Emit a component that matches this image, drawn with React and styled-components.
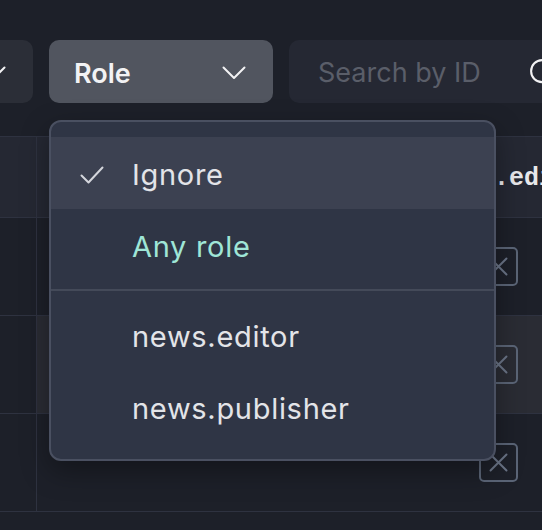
import React from "react";
import styled, { createGlobalStyle } from "styled-components";

const GlobalStyle = createGlobalStyle`
  html, body {
    margin: 0;
    padding: 0;
    background: #1d2029;
  }
  body {
    font-family: Inter, "Noto Sans", sans-serif;
    overflow: hidden;
  }
  * {
    box-sizing: border-box;
  }
`;

const Page = styled.div`
  width: 542px;
  height: 530px;
  overflow: hidden;
  background: #1d2029;
  padding-top: 40px;
`;

const Toolbar = styled.div`
  display: flex;
  gap: 16px;
  height: 63px;
  margin-left: -167px;
`;

const SelectWrap = styled.div`
  position: relative;
  flex: none;
`;

const SelectButton = styled.button`
  width: ${(p) => p.$w}px;
  height: 63px;
  border: none;
  border-radius: 10px;
  background: ${(p) => (p.$open ? "#51555f" : "#2b2e37")};
  color: #f2f2f4;
  font-family: Inter, sans-serif;
  font-weight: 600;
  font-size: 27px;
  display: flex;
  align-items: center;
  justify-content: ${(p) => (p.$iconOnly ? "flex-end" : "space-between")};
  padding: 3px 27px 0 25px;
`;

const SearchBox = styled.div`
  flex: none;
  width: 290px;
  height: 63px;
  border-radius: 10px;
  background: #252833;
  display: flex;
  align-items: center;
  justify-content: space-between;
  padding: 2px 19px 0 29px;
  color: #5a5e69;
  font-size: 27px;
`;

const Menu = styled.div`
  position: absolute;
  top: 80px;
  left: 0;
  z-index: 10;
  width: 447px;
  border: 2px solid #4a5061;
  border-radius: 12px;
  background: #2f3545;
  padding: 15px 0 16px;
  box-shadow: 0 10px 28px rgba(0, 0, 0, 0.35);
`;

const MenuItem = styled.div`
  height: 72px;
  display: flex;
  align-items: center;
  padding-left: 29px;
  padding-top: 3px;
  font-size: 29px;
  letter-spacing: 0.7px;
  color: ${(p) => (p.$accent ? "#9fe6d7" : "#e3e4e8")};
  background: ${(p) => (p.$active ? "#3c4151" : "transparent")};
`;

const CheckSlot = styled.span`
  width: 52px;
  display: flex;
  align-items: center;
`;

const Separator = styled.div`
  height: 2px;
  margin: 8px 0;
  background: #444a59;
`;

const Table = styled.div`
  margin-top: 33px;
  border-top: 1px solid #2e3240;
`;

const Row = styled.div`
  display: grid;
  grid-template-columns: 37px 1fr 122px;
  height: ${(p) => (p.$head ? 81 : 98)}px;
  border-bottom: 1px solid #2e3240;
  background: ${(p) => (p.$head ? "#252833" : "transparent")};
`;

const Cell = styled.div`
  display: flex;
  align-items: center;
  border-right: ${(p) => (p.$first ? "1px solid #2e3240" : "none")};
  background: ${(p) => (p.$hl ? "#2a2c34" : "transparent")};
`;

const RoleCell = styled(Cell)`
  padding-left: 14px;
  padding-right: 24px;
  padding-top: ${(p) => (p.$head ? "2px" : "0")};
  justify-content: ${(p) => (p.$head ? "flex-start" : "flex-end")};
  font-family: "Liberation Mono", "DejaVu Sans Mono", monospace;
  font-weight: 700;
  font-size: 25px;
  color: #e8e8eb;
  white-space: nowrap;
  overflow: hidden;
`;

const RemoveButton = styled.button`
  width: 39px;
  height: 39px;
  border: 2px solid #5b6577;
  border-radius: 5px;
  background: transparent;
  padding: 0;
  display: flex;
  align-items: center;
  justify-content: center;
`;

const Chevron = () => (
  <svg width="24" height="14" viewBox="0 0 24 14" fill="none">
    <path d="M1.5 1.5 L12 12 L22.5 1.5" stroke="#f2f2f4" strokeWidth="2" strokeLinecap="round" strokeLinejoin="round" />
  </svg>
);

const Check = () => (
  <svg width="24" height="18" viewBox="0 0 24 18" fill="none">
    <path d="M1.5 9.5 L8.5 16.5 L22.5 1.5" stroke="#d4d6dc" strokeWidth="2" strokeLinecap="round" strokeLinejoin="round" />
  </svg>
);

const SearchIcon = () => (
  <svg width="33" height="33" viewBox="0 0 24 24" fill="none" stroke="#f2f2f4" strokeWidth="1.5" strokeLinecap="round">
    <circle cx="11" cy="11" r="8" />
    <path d="M21 21 L16.65 16.65" />
  </svg>
);

const XIcon = () => (
  <svg width="19" height="19" viewBox="0 0 19 19" fill="none" stroke="#6b7588" strokeWidth="2" strokeLinecap="round">
    <path d="M1.5 1.5 L17.5 17.5 M17.5 1.5 L1.5 17.5" />
  </svg>
);

const rows = [{ hl: false }, { hl: true }, { hl: false }];

export default function App() {
  return (
    <Page>
      <GlobalStyle />
      <Toolbar>
        <SelectWrap>
          <SelectButton $w={200} $iconOnly aria-label="Status">
            <Chevron />
          </SelectButton>
        </SelectWrap>
        <SelectWrap>
          <SelectButton $w={224} $open>
            <span>Role</span>
            <Chevron />
          </SelectButton>
          <Menu>
            <MenuItem $active>
              <CheckSlot>
                <Check />
              </CheckSlot>
              Ignore
            </MenuItem>
            <MenuItem $accent>
              <CheckSlot />
              Any role
            </MenuItem>
            <Separator />
            <MenuItem>
              <CheckSlot />
              news.editor
            </MenuItem>
            <MenuItem>
              <CheckSlot />
              news.publisher
            </MenuItem>
          </Menu>
        </SelectWrap>
        <SearchBox>
          <span>Search by ID</span>
          <SearchIcon />
        </SearchBox>
      </Toolbar>
      <Table>
        <Row $head>
          <Cell $first />
          <Cell />
          <RoleCell $head>news.editor</RoleCell>
        </Row>
        {rows.map((r, i) => (
          <Row key={i}>
            <Cell $first />
            <Cell $hl={r.hl} />
            <RoleCell $hl={r.hl}>
              <RemoveButton>
                <XIcon />
              </RemoveButton>
            </RoleCell>
          </Row>
        ))}
      </Table>
    </Page>
  );
}
